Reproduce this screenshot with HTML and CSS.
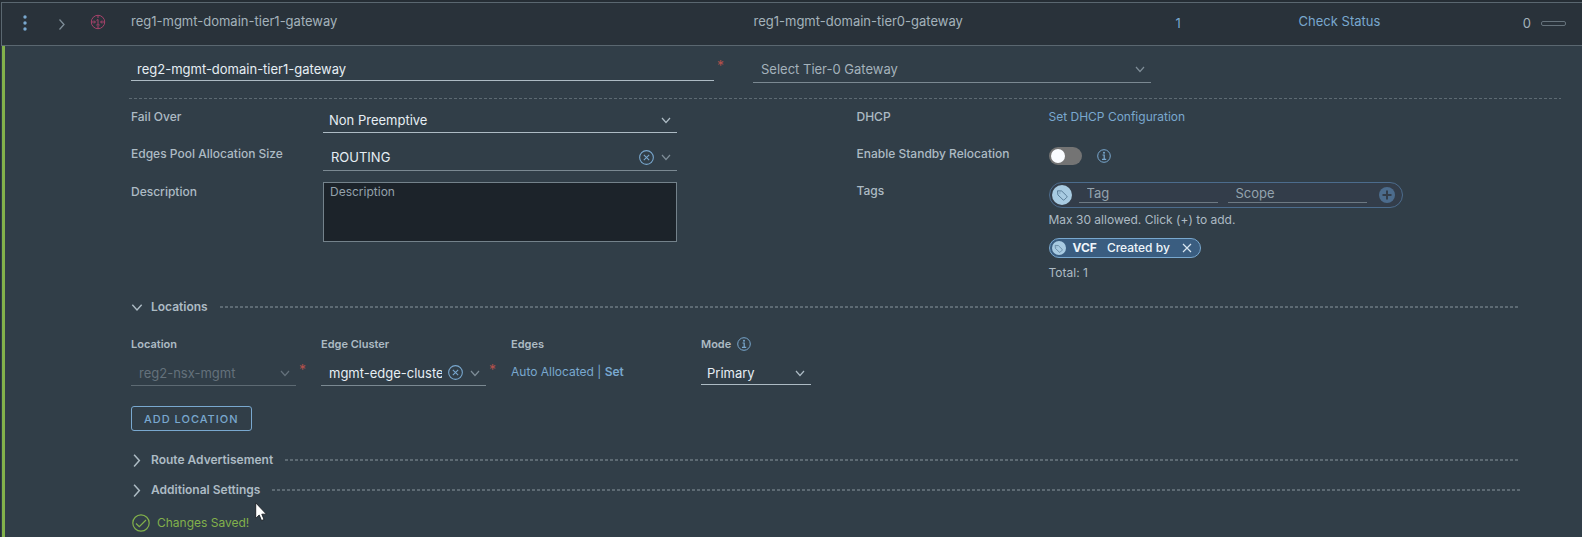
FILE: index.html
```html
<!DOCTYPE html>
<html lang="en">
<head>
<meta charset="utf-8">
<title>Tier-1 Gateways</title>
<link rel="stylesheet" href="styles.css">
</head>
<body>
<svg class="sprite" aria-hidden="true">
  <symbol id="chevron" viewBox="0 0 12 12"><path d="M2 4l4 4.500 4-4.500" fill="none" stroke="currentColor" stroke-width="1.200"/></symbol>
  <symbol id="chevron-right" viewBox="0 0 12 12"><path d="M3.500 1.500l4.500 5-4.500 5" fill="none" stroke="currentColor" stroke-width="1.300"/></symbol>
  <symbol id="clear" viewBox="0 0 14 14"><g fill="none" stroke="currentColor"><circle cx="7" cy="7" r="6.400"/><path d="M4.500 4.500l5 5m0-5l-5 5"/></g></symbol>
  <symbol id="info" viewBox="0 0 14 14"><g fill="none" stroke="currentColor"><circle cx="7" cy="7" r="6.300"/><path d="M5.500 6h1.700v4M5 10.300h4.200" stroke-width="1.200"/></g><circle cx="7" cy="3.800" r="1" fill="currentColor"/></symbol>
  <symbol id="tag" viewBox="0 0 12 12"><g fill="none" stroke="currentColor" stroke-width=".9" stroke-linejoin="round"><path d="M1.500 1.800l4.200.2 5.100 5c.4.400.4.900 0 1.300l-2.500 2.500c-.4.400-.9.400-1.300 0L1.900 5.900z"/><path d="M3.500 4h.8"/></g></symbol>
</svg>

<main class="page">
  <table class="gateways">
    <colgroup><col class="c-menu"><col class="c-open"><col class="c-kind"><col class="c-name"><col class="c-tier"><col class="c-count"><col class="c-status"><col class="c-alarm"></colgroup>
    <tbody>
      <tr>
        <td class="middle"><button class="icon-btn kebab" type="button" aria-label="Actions"><svg width="4" height="16" viewBox="0 0 4 16" fill="currentColor"><circle cx="2" cy="2" r="1.700"/><circle cx="2" cy="8" r="1.700"/><circle cx="2" cy="14" r="1.700"/></svg></button></td>
        <td class="middle"><button class="icon-btn" type="button" aria-label="Expand"><svg width="12" height="12"><use href="#chevron-right"/></svg></button></td>
        <td class="kind"><svg width="16" height="16" viewBox="0 0 16 16" fill="none" stroke="currentColor" role="img" aria-label="Tier-1 gateway"><circle cx="8" cy="8" r="6.700"/><path d="M1.500 8h3.500M11 8h3.500M4 6.500L5.500 8 4 9.500M12 6.500L10.500 8l1.500 1.500M8 1.500v2.500M8 12v2.500M6.500 6.300L8 5.500V11M6.300 11h3.400"/></svg></td>
        <td>reg1-mgmt-domain-tier1-gateway</td>
        <td>reg1-mgmt-domain-tier0-gateway</td>
        <td class="count"><a href="#">1</a></td>
        <td><a href="#">Check Status</a></td>
        <td class="alarm"><span class="alarm-box">0<i class="meter"></i></span></td>
      </tr>
    </tbody>
  </table>

  <form class="editor">
    <div class="names">
      <div class="required-field">
        <input class="line-input" type="text" aria-label="Name" value="reg2-mgmt-domain-tier1-gateway">
        <span class="star">*</span>
      </div>
      <div class="combo tier0">
        <input type="text" aria-label="Tier-0 Gateway" placeholder="Select Tier-0 Gateway">
        <button class="icon-btn" type="button" aria-label="Open"><svg width="12" height="12"><use href="#chevron"/></svg></button>
      </div>
    </div>

    <div class="settings">
      <div class="column">
        <div class="row">
          <label for="failover">Fail Over</label>
          <div class="select">
            <select id="failover"><option>Non Preemptive</option><option>Preemptive</option></select>
            <svg width="12" height="12"><use href="#chevron"/></svg>
          </div>
        </div>
        <div class="row">
          <label for="pool">Edges Pool Allocation Size</label>
          <div class="combo">
            <input id="pool" type="text" value="ROUTING">
            <button class="icon-btn blue" type="button" aria-label="Clear"><svg width="15" height="15"><use href="#clear"/></svg></button>
            <button class="icon-btn" type="button" aria-label="Open"><svg width="12" height="12"><use href="#chevron"/></svg></button>
          </div>
        </div>
        <div class="row">
          <label for="description">Description</label>
          <textarea id="description" placeholder="Description"></textarea>
        </div>
      </div>

      <div class="column">
        <div class="row">
          <span class="label">DHCP</span>
          <a class="row-link" href="#">Set DHCP Configuration</a>
        </div>
        <div class="row">
          <label for="standby">Enable Standby Relocation</label>
          <div class="toggle-line">
            <input id="standby" class="toggle" type="checkbox">
            <svg class="blue" width="14" height="14"><use href="#info"/></svg>
          </div>
        </div>
        <div class="row">
          <label for="tag">Tags</label>
          <div class="tags">
            <div class="tag-entry">
              <span class="tag-icon"><svg width="12" height="12"><use href="#tag"/></svg></span>
              <input id="tag" type="text" placeholder="Tag">
              <input type="text" aria-label="Scope" placeholder="Scope">
              <button class="icon-btn add" type="button" aria-label="Add tag"><svg width="16" height="16" viewBox="0 0 16 16"><circle cx="8" cy="8" r="8" fill="currentColor"/><path class="plus" d="M8 3.500v9M3.500 8h9"/></svg></button>
            </div>
            <p class="hint">Max 30 allowed. Click (+) to add.</p>
            <div class="chip">
              <span class="tag-icon small"><svg width="9" height="9"><use href="#tag"/></svg></span>
              <b>VCF</b><span>Created by</span>
              <button class="icon-btn" type="button" aria-label="Remove tag"><svg width="10" height="10" viewBox="0 0 10 10"><path d="M1 1l8 8M9 1L1 9" stroke="currentColor" stroke-width="1.200"/></svg></button>
            </div>
            <p class="total">Total: 1</p>
          </div>
        </div>
      </div>
    </div>

    <section class="section">
      <button class="section-head" type="button"><svg width="14" height="14"><use href="#chevron"/></svg>Locations</button>
    </section>

    <div class="locations">
      <div class="cell">
        <label for="location">Location</label>
        <div class="required-field">
          <div class="combo disabled">
            <input id="location" type="text" value="reg2-nsx-mgmt" disabled>
            <button class="icon-btn" type="button" aria-label="Open" disabled><svg width="12" height="12"><use href="#chevron"/></svg></button>
          </div>
          <span class="star">*</span>
        </div>
      </div>
      <div class="cell">
        <label for="cluster">Edge Cluster</label>
        <div class="required-field">
          <div class="combo">
            <input id="cluster" type="text" value="mgmt-edge-cluster">
            <button class="icon-btn blue" type="button" aria-label="Clear"><svg width="15" height="15"><use href="#clear"/></svg></button>
            <button class="icon-btn" type="button" aria-label="Open"><svg width="12" height="12"><use href="#chevron"/></svg></button>
          </div>
          <span class="star">*</span>
        </div>
      </div>
      <div class="cell">
        <span class="label">Edges</span>
        <div class="edges"><a href="#">Auto Allocated</a> | <a class="strong" href="#">Set</a></div>
      </div>
      <div class="cell">
        <label for="mode">Mode <svg class="blue" width="14" height="14"><use href="#info"/></svg></label>
        <div class="select mode">
          <select id="mode"><option>Primary</option><option>Secondary</option></select>
          <svg width="12" height="12"><use href="#chevron"/></svg>
        </div>
      </div>
    </div>
    <button class="outline-btn" type="button">ADD LOCATION</button>

    <section class="section">
      <button class="section-head" type="button"><svg width="14" height="14"><use href="#chevron-right"/></svg>Route Advertisement</button>
    </section>
    <section class="section">
      <button class="section-head" type="button"><svg width="14" height="14"><use href="#chevron-right"/></svg>Additional Settings</button>
    </section>

    <p class="saved"><svg width="18" height="18" viewBox="0 0 18 18" fill="none" stroke="currentColor" stroke-width="1.200"><circle cx="9" cy="9" r="8.200"/><path d="M4 9.500l3.300 3.200L14 6"/></svg>Changes Saved!</p>
  </form>
  <svg class="pointer" width="12" height="20" viewBox="0 0 12 20" aria-hidden="true"><path d="M.7.800v15.600l3.500-3.300 2.300 5.500 2.600-1.100-2.300-5.300h4.700z" fill="#fff" stroke="#20262b"/></svg>
</main>
</body>
</html>
```
FILE: styles.css
```css
* { box-sizing: border-box; }

body {
  margin: 0;
  background: #313e48;
  color: #adbbc4;
  font: 13px/20px Inter, "Noto Sans", sans-serif;
}

p { margin: 0; }
a { color: #79a8cf; text-decoration: none; }
.sprite { position: absolute; width: 0; height: 0; }
svg { display: block; flex: none; }
input, select, textarea, button { font: inherit; color: inherit; }
:focus { outline: none; }

.page {
  position: relative;
  display: flex;
  flex-direction: column;
  min-height: 100vh;
  overflow: hidden;
  padding-top: 2px;
  border-left: 1px solid #252d34;
  background: linear-gradient(#252d34 2px, transparent 2px);
}

.icon-btn {
  display: inline-flex;
  padding: 0;
  border: 0;
  background: none;
  color: #7e8d97;
}
.kebab, .blue { color: #79a8cf; }

/* Gateway list row */
.gateways {
  width: 100%;
  table-layout: fixed;
  border-collapse: separate;
  border-spacing: 0;
  border: 1px solid #5a6770;
  border-right: 0;
  background: #29323a;
}
.c-menu { width: 46px; }
.c-open { width: 27px; }
.c-kind { width: 56px; }
.c-name { width: 39.4%; }
.c-tier { width: 25.5%; }
.c-count { width: 9%; }
.c-status { width: 13%; }
.gateways td { height: 42px; padding: 8px 0 14px; vertical-align: top; color: #a4b2bb; }
.gateways a { color: #79a8cf; }
.gateways .middle { padding: 12px 0 0; text-align: center; }
.gateways .kind { padding: 11px 0 0 15px; color: #a8426b; }
.gateways .count { padding: 10px 0 0 19px; }
.gateways .alarm { padding: 10px 16px 0 0; }
.alarm-box { display: flex; justify-content: flex-end; align-items: center; gap: 10px; }
.meter { width: 25px; height: 5px; border: 1px solid #66737c; border-radius: 2px; }

/* Editor */
.editor {
  flex: 1;
  padding-left: 126px;
  border-left: 3px solid #82b14b;
  margin-left: 1px;
}

.names {
  display: grid;
  grid-template-columns: 622fr 398fr 410fr;
  margin: 0 21px 0 -2px;
  padding: 12px 0 16px 2px;
  background: repeating-linear-gradient(90deg, #5d6a73 0 3px, transparent 3px 5px) bottom / 100% 1px no-repeat;
}
.required-field { display: flex; align-items: flex-start; gap: 3px; }
.star { width: 7px; color: #b5504b; font-size: 14px; line-height: 16px; }

.line-input {
  flex: 1;
  min-width: 0;
  height: 23px;
  padding: 0 6px;
  border: 0;
  border-bottom: 1px solid #adbbc4;
  background: none;
  color: #e6eef4;
}
.names .required-field { padding-right: 29px; }
.names .combo { height: 25px; padding-bottom: 3px; }

.combo {
  display: flex;
  align-items: center;
  gap: 6px;
  height: 24px;
  padding-right: 5px;
  border-bottom: 1px solid #7b8992;
}
.combo input {
  flex: 1;
  min-width: 0;
  padding: 0 0 0 8px;
  border: 0;
  background: none;
  color: #e6eef4;
}
.combo input::placeholder { color: #a4b2bb; opacity: 1; }
.combo.disabled { border-color: #5d6a73; }
.combo.disabled input, .combo.disabled .icon-btn { color: #64717b; }

.select { position: relative; color: #adbbc4; }
.select select {
  display: block;
  width: 100%;
  height: 24px;
  padding: 0 20px 0 6px;
  border: 0;
  border-bottom: 1px solid #adbbc4;
  border-radius: 0;
  appearance: none;
  background: none;
  color: #e6eef4;
}
.select svg { position: absolute; right: 5px; top: 7px; pointer-events: none; }
.row .select select { height: 26px; }

.settings { display: grid; grid-template-columns: 1fr 1fr; padding: 8px 0 9px; }
.column { display: flex; flex-direction: column; gap: 11px; }
.row { display: grid; grid-template-columns: 192px minmax(0, 354px); align-items: start; min-height: 26px; }
.row > label, .row > .label { font-size: 12px; font-weight: 500; }
.row-link { font-size: 12px; }
.row .combo { height: 27px; }

textarea {
  height: 60px;
  padding: 0 6px;
  border: 1px solid #74828b;
  background: #1c232a;
  font-size: 12px;
  line-height: 18px;
  resize: none;
}
textarea::placeholder { color: #94a1aa; opacity: 1; }

.toggle-line { display: flex; align-items: center; gap: 15px; padding-top: 3px; }
.toggle {
  width: 33px;
  height: 18px;
  margin: 0;
  padding: 2px;
  appearance: none;
  border-radius: 9px;
  background: #747474;
}
.toggle::before { content: ""; display: block; width: 14px; height: 14px; border-radius: 50%; background: #fafcff; }

.tags { padding-top: 1px; }
.tag-entry {
  display: flex;
  align-items: center;
  gap: 10px;
  height: 26px;
  padding: 0 7px 0 2px;
  border: 1px solid #4c6c8d;
  border-radius: 13px;
  background: #333d4a;
}
.tag-icon {
  display: flex;
  flex: none;
  align-items: center;
  justify-content: center;
  width: 20px;
  height: 20px;
  border-radius: 50%;
  background: #a8cbe2;
  color: #50738f;
}
.tag-entry .tag-icon { margin-right: -3px; }
.tag-icon.small { width: 14px; height: 14px; }
.tag-entry input {
  flex: 1;
  min-width: 0;
  height: 20px;
  margin-bottom: 4px;
  padding: 0 8px;
  border: 0;
  border-bottom: 1px solid #6d7983;
  background: none;
}
.tag-entry input::placeholder { color: #94a3ae; opacity: 1; }
.add { color: #4c6c8d; margin-left: 2px; }
.plus { stroke: #333d4a; stroke-width: 2; }
.hint { padding-top: 2px; font-size: 12px; }
.chip {
  display: flex;
  align-items: center;
  width: fit-content;
  height: 20px;
  margin-top: 8px;
  padding: 0 8px 0 2px;
  border: 1px solid #79a8cf;
  border-radius: 10px;
  background: #3a5d80;
  color: #eef5fa;
  font-size: 12px;
  font-weight: 500;
  line-height: 16px;
}
.chip b { margin: 0 10px 0 7px; font-weight: 700; }
.chip .icon-btn { margin-left: 12px; color: #d8e6f0; }
.total { padding-top: 5px; font-size: 12px; }

/* Collapsible sections */
.section { display: flex; align-items: center; gap: 12px; height: 30px; margin-right: 62px; }
.section::after {
  content: "";
  flex: 1;
  height: 2px;
  background: repeating-linear-gradient(90deg, #5d6a73 0 3px, transparent 3px 5px);
}
.section-head {
  display: flex;
  align-items: center;
  gap: 7px;
  padding: 0;
  border: 0;
  background: none;
  font-size: 12px;
  font-weight: 600;
}
.section-head svg { margin-left: -1px; }

.locations { display: flex; flex-wrap: wrap; padding-top: 12px; }
.cell { width: 190px; }
.cell > label, .cell > .label {
  display: flex;
  align-items: center;
  gap: 6px;
  font-size: 11px;
  font-weight: 600;
}
.cell .required-field { padding-top: 8px; }
.cell .combo { width: 165px; padding-bottom: 2px; }
.edges { padding-top: 8px; color: #79a8cf; font-size: 12px; }
.strong { font-weight: 600; }
.mode { width: 110px; padding-top: 7px; }
.mode svg { top: 13px; }

.outline-btn {
  display: block;
  height: 25px;
  margin: 20px 0 14px;
  padding: 0 12px;
  border: 1px solid #79a8cf;
  border-radius: 3px;
  background: none;
  color: #79a8cf;
  font-size: 11px;
  font-weight: 500;
  letter-spacing: 1px;
}

.saved { display: flex; align-items: center; gap: 7px; padding: 8px 0 0; margin-left: 1px; color: #82b14b; font-size: 12px; }

.pointer { position: absolute; left: 254px; top: 502px; }
```
